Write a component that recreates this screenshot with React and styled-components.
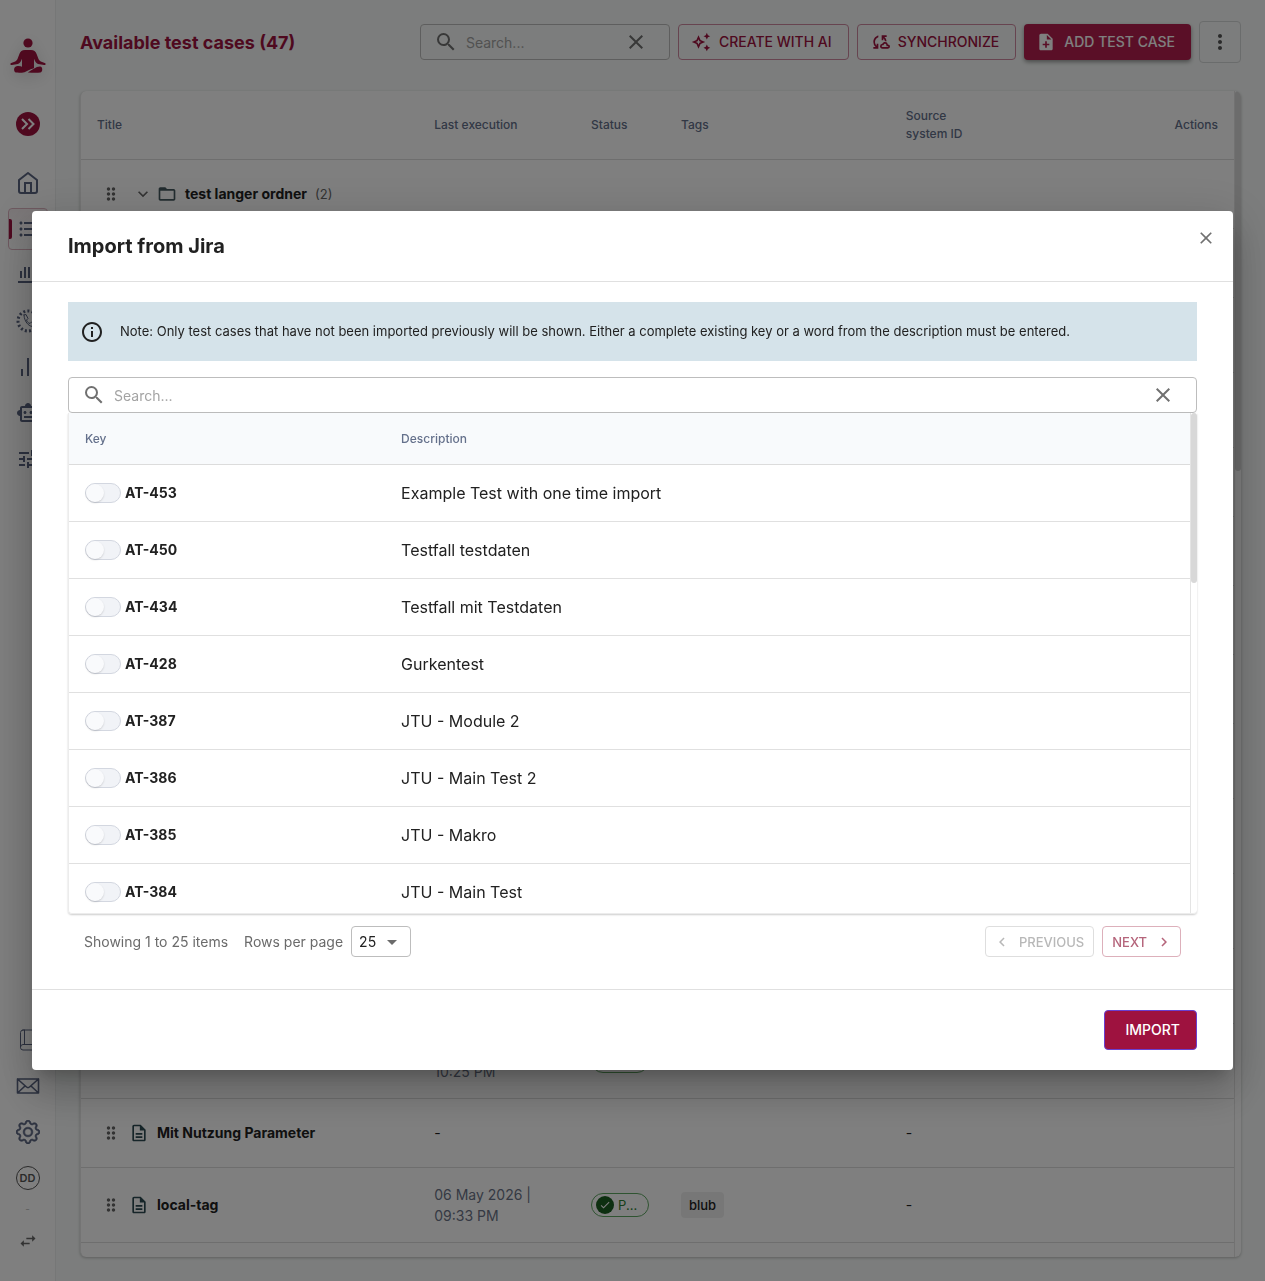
import React, { useState } from "react";
import styled, { createGlobalStyle, css } from "styled-components";
import {
  MdCheck,
  MdChevronLeft,
  MdChevronRight,
  MdClose,
  MdDragIndicator,
  MdExpandMore,
  MdArrowDropDown,
  MdFolderOpen,
  MdFormatListBulleted,
  MdInfoOutline,
  MdMoreVert,
  MdNoteAdd,
  MdOutlineAutoAwesome,
  MdOutlineCloudSync,
  MdOutlineDescription,
  MdOutlineSmartToy,
  MdSearch,
  MdSwapHoriz,
  MdTune,
} from "react-icons/md";
import { BsGear } from "react-icons/bs";

const brand = "#9e123f";
const muted = "#64708b";

const testCases = [
  { id: 1, title: "test langer ordner", folder: true, count: 2 },
  { id: 2 },
  { id: 3, tall: true },
  { id: 4, tall: true },
  { id: 5 },
  { id: 6 },
  { id: 7 },
  { id: 8 },
  { id: 9, tall: true },
  { id: 10, tall: true },
  { id: 11, tall: true },
  { id: 12, tall: true },
  { id: 13, date: ["06 May 2026 |", "10:25 PM"], passed: true },
  { id: 14, title: "Mit Nutzung Parameter" },
  { id: 15, title: "local-tag", date: ["06 May 2026 |", "09:33 PM"], passed: true, tag: "blub" },
];

const jiraIssues = [
  { key: "AT-453", description: "Example Test with one time import" },
  { key: "AT-450", description: "Testfall testdaten" },
  { key: "AT-434", description: "Testfall mit Testdaten" },
  { key: "AT-428", description: "Gurkentest" },
  { key: "AT-387", description: "JTU - Module 2" },
  { key: "AT-386", description: "JTU - Main Test 2" },
  { key: "AT-385", description: "JTU - Makro" },
  { key: "AT-384", description: "JTU - Main Test" },
];

const LogoIcon = () => (
  <svg width="36" height="36" viewBox="0 0 36 36" fill="currentColor">
    <circle cx="18" cy="5" r="4.6" />
    <path d="M15 12h6c3 0 4.600 1.300 5.600 4l1.800 4.800c.6 1.500 1.500 2.400 3 3l3.400 1.200c1.500.6 1 2.200-.7 2l-4.600-.7c-2.200-.4-3.600-1.500-4.500-3.400l-1-2.100v9.400l-3 .9-9 2V20.800l-1 2.100c-.9 1.900-2.300 3-4.500 3.400l-4.600.7c-1.700.2-2.200-1.400-.7-2l3.400-1.200c1.500-.6 2.400-1.500 3-3L9.400 16c1-2.700 2.600-4 5.600-4z" />
    <path d="M6.500 28.300c2.300-.5 4.300-.1 6.500.9l11 .2-9.500 4.800c-2.500.6-6 .6-8.500.4-2.400-.3-2.800-5.600.5-6.300z" />
    <path d="M17.800 34.400c2-1.400 4-2.800 6.400-4 2-1.300 3.800-2.100 6-2 2.900.4 2.600 5.800 0 6.200-3.500.3-8 .2-12.400-.2z" />
  </svg>
);

const ExpandIcon = () => (
  <svg width="24" height="24" viewBox="0 0 24 24" fill="none">
    <circle cx="12" cy="12" r="12" fill={brand} />
    <path d="M6 7l5 5-5 5M12.500 7l5 5-5 5" stroke="#fff" strokeWidth="2" />
  </svg>
);

const StrokeIcon = ({ children, width = 2 }) => (
  <svg width="24" height="24" viewBox="0 0 24 24" fill="none" stroke="currentColor" strokeWidth={width} strokeLinecap="round" strokeLinejoin="round">
    {children}
  </svg>
);

const HomeIcon = () => (
  <StrokeIcon>
    <path d="M3 9l9-7 9 7v11a2 2 0 0 1-2 2H5a2 2 0 0 1-2-2z" />
    <path d="M9 22V12h6v10" strokeLinejoin="miter" />
  </StrokeIcon>
);

const HistogramIcon = () => (
  <StrokeIcon>
    <path d="M5 8v7M9 4v11M13 4v11M17 8v7M21 6v9M2 19h20" strokeLinecap="butt" />
  </StrokeIcon>
);

const CallIcon = () => (
  <StrokeIcon width={1}>
    <circle cx="12" cy="12" r="10" strokeWidth="3" strokeDasharray="2 2.200" strokeLinecap="butt" />
    <path d="M8 6l2-.5 2 4-1.500 1.500c.6 1.800 1.700 3 3.500 3.500l1.500-1.500 3 2-.5 2c-4 2-10-4-10-11z" />
  </StrokeIcon>
);

const BarsIcon = () => (
  <StrokeIcon>
    <path d="M6 14v7M12 3v18M18 9v12" strokeLinecap="butt" />
  </StrokeIcon>
);

const BookIcon = () => (
  <StrokeIcon width={1}>
    <path d="M7 2h14v20H7a2.500 2.500 0 0 1-2.500-2.500v-15A2.500 2.500 0 0 1 7 2zM8.500 2v14.500M4.500 19A2.500 2.500 0 0 1 7 16.500h14" />
  </StrokeIcon>
);

const MailIcon = () => (
  <StrokeIcon width={1.6}>
    <path d="M1.500 5h21v14h-21zM1.500 5l9 8c1 .8 2 .8 3 0l9-8M1.500 19L9 12M22.500 19L15 12" />
  </StrokeIcon>
);

const navItems = [
  { name: "Home", icon: <HomeIcon /> },
  { name: "Test cases", icon: <MdFormatListBulleted size={24} />, active: true },
  { name: "Executions", icon: <HistogramIcon /> },
  { name: "Schedules", icon: <CallIcon /> },
  { name: "Reports", icon: <BarsIcon /> },
  { name: "Automation", icon: <MdOutlineSmartToy size={24} /> },
  { name: "Configuration", icon: <MdTune size={24} /> },
];

const SearchBox = ({ width }) => (
  <SearchField $width={width}>
    <MdSearch size={24} />
    <input type="text" placeholder="Search..." aria-label="Search" />
    <PlainButton aria-label="Clear search">
      <MdClose size={24} />
    </PlainButton>
  </SearchField>
);

const Sidebar = () => (
  <SidebarWrapper>
    <Logo href="#" aria-label="Start">
      <LogoIcon />
    </Logo>
    <ExpandButton aria-label="Expand menu">
      <ExpandIcon />
    </ExpandButton>
    <NavList>
      {navItems.map((item) => (
        <NavLink key={item.name} href="#" aria-label={item.name} $active={item.active}>
          {item.icon}
        </NavLink>
      ))}
    </NavList>
    <NavList $bottom>
      <NavLink href="#" aria-label="Documentation">
        <BookIcon />
      </NavLink>
      <NavLink href="#" aria-label="Contact">
        <MailIcon />
      </NavLink>
      <NavLink href="#" aria-label="Settings">
        <BsGear size={24} stroke="currentColor" strokeWidth={0.4} />
      </NavLink>
      <NavLink href="#" aria-label="Profile">
        <Avatar>DD</Avatar>
      </NavLink>
    </NavList>
    <ProjectName>-</ProjectName>
    <SwitchProject aria-label="Switch project">
      <MdSwapHoriz size={20} />
    </SwitchProject>
  </SidebarWrapper>
);

const TestCaseRow = ({ item }) => {
  if (!item.title && !item.date) {
    return (
      <tr>
        <Cell colSpan={6} $tall={item.tall} />
      </tr>
    );
  }

  return (
    <tr>
      <Cell>
        <TitleCell>
          <DragHandle>
            <MdDragIndicator size={20} />
          </DragHandle>
          {item.folder ? (
            <FolderIcons>
              <MdExpandMore size={20} color="#666" />
              <MdFolderOpen size={20} />
            </FolderIcons>
          ) : (
            <FileIcon size={20} />
          )}
          <strong>{item.title}</strong>
          {item.count && <Count>({item.count})</Count>}
        </TitleCell>
      </Cell>
      <Cell>
        {item.date ? (
          <DateText>
            {item.date[0]}
            <br />
            {item.date[1]}
          </DateText>
        ) : (
          !item.folder && "-"
        )}
      </Cell>
      <Cell>
        {item.passed && (
          <StatusChip>
            <CheckBadge>
              <MdCheck size={12} />
            </CheckBadge>
            <span>P...</span>
          </StatusChip>
        )}
      </Cell>
      <Cell>{item.tag && <Tag>{item.tag}</Tag>}</Cell>
      <Cell>{!item.folder && item.title && "-"}</Cell>
      <Cell />
    </tr>
  );
};

const ImportDialog = () => {
  const [selected, setSelected] = useState([]);

  const toggle = (key) => {
    setSelected(selected.includes(key) ? selected.filter((k) => k !== key) : [...selected, key]);
  };

  return (
    <Backdrop>
      <Dialog role="dialog" aria-modal="true" aria-labelledby="import-title">
        <DialogHeader>
          <h2 id="import-title">Import from Jira</h2>
          <CloseButton aria-label="Close">
            <MdClose size={20} />
          </CloseButton>
        </DialogHeader>
        <DialogBody>
          <Note>
            <MdInfoOutline size={24} />
            <p>
              Note: Only test cases that have not been imported previously will be shown. Either a complete existing key
              or a word from the description must be entered.
            </p>
          </Note>
          <SearchBox />
          <IssueArea>
            <TableScroll>
              <IssueTable>
                <thead>
                  <tr>
                    <IssueHead $width="28.2%">Key</IssueHead>
                    <IssueHead>Description</IssueHead>
                  </tr>
                </thead>
                <tbody>
                  {jiraIssues.map((issue) => (
                    <tr key={issue.key}>
                      <IssueCell>
                        <KeyLabel>
                          <Switch
                            type="checkbox"
                            checked={selected.includes(issue.key)}
                            onChange={() => toggle(issue.key)}
                          />
                          {issue.key}
                        </KeyLabel>
                      </IssueCell>
                      <IssueCell>{issue.description}</IssueCell>
                    </tr>
                  ))}
                </tbody>
              </IssueTable>
            </TableScroll>
            <ScrollTrack>
              <ScrollThumb $size="34%" />
            </ScrollTrack>
          </IssueArea>
          <Pagination>
            <span>Showing 1 to 25 items</span>
            <RowsLabel htmlFor="rows">Rows per page</RowsLabel>
            <SelectWrapper>
              <select id="rows" defaultValue="25">
                <option>25</option>
                <option>50</option>
              </select>
              <MdArrowDropDown size={24} />
            </SelectWrapper>
            <PageButtons>
              <PageButton disabled>
                <MdChevronLeft size={18} />
                PREVIOUS
              </PageButton>
              <PageButton $next>
                NEXT
                <MdChevronRight size={18} />
              </PageButton>
            </PageButtons>
          </Pagination>
        </DialogBody>
        <DialogFooter>
          <ImportButton>IMPORT</ImportButton>
        </DialogFooter>
      </Dialog>
    </Backdrop>
  );
};

const App = () => (
  <>
    <GlobalStyle />
    <Page>
      <Sidebar />
      <Main>
        <TopBar>
          <h1>Available test cases (47)</h1>
          <SearchBox width="250px" />
          <Button>
            <MdOutlineAutoAwesome size={20} />
            CREATE WITH AI
          </Button>
          <Button>
            <MdOutlineCloudSync size={20} />
            SYNCHRONIZE
          </Button>
          <PrimaryButton>
            <MdNoteAdd size={20} />
            ADD TEST CASE
          </PrimaryButton>
          <MoreButton aria-label="More">
            <MdMoreVert size={24} />
          </MoreButton>
        </TopBar>
        <Card>
          <TableScroll>
            <CaseTable>
              <thead>
                <tr>
                  <HeadCell $width="29.25%">Title</HeadCell>
                  <HeadCell $width="13.6%">Last execution</HeadCell>
                  <HeadCell $width="7.8%">Status</HeadCell>
                  <HeadCell $width="19.5%">Tags</HeadCell>
                  <HeadCell $width="9%">Source system ID</HeadCell>
                  <HeadCell $right>Actions</HeadCell>
                </tr>
              </thead>
              <tbody>
                {testCases.map((item) => (
                  <TestCaseRow key={item.id} item={item} />
                ))}
              </tbody>
            </CaseTable>
          </TableScroll>
          <ScrollTrack>
            <ScrollThumb $size="32.6%" />
          </ScrollTrack>
        </Card>
      </Main>
    </Page>
    <ImportDialog />
  </>
);

export default App;

const GlobalStyle = createGlobalStyle`
  * {
    box-sizing: border-box;
  }
  body {
    margin: 0;
    background: #f8fbfa;
    color: #212121;
    font-family: Inter, "Liberation Sans", sans-serif;
    font-size: 14px;
  }
  button, input, select {
    font-family: inherit;
  }
  button {
    cursor: pointer;
  }
  svg {
    flex-shrink: 0;
  }
`;

const Page = styled.div`
  display: flex;
  height: 100vh;
`;

const SidebarWrapper = styled.aside`
  width: 56px;
  flex-shrink: 0;
  display: flex;
  flex-direction: column;
  align-items: center;
  padding: 38px 0 30px;
  background: #fff;
  border-right: 1px solid #eceeef;
`;

const Logo = styled.a`
  display: flex;
  color: ${brand};
  filter: drop-shadow(0 4px 8px rgba(0, 0, 0, 0.15));
`;

const PlainButton = styled.button`
  display: flex;
  padding: 0;
  border: none;
  background: none;
  color: #707070;
`;

const ExpandButton = styled(PlainButton)`
  margin: 38px 0 26px;
`;

const NavList = styled.nav`
  display: flex;
  flex-direction: column;
  gap: 4px;
  margin-top: ${({ $bottom }) => ($bottom ? "auto" : "0")};
`;

const NavLink = styled.a`
  display: flex;
  align-items: center;
  justify-content: center;
  width: 40px;
  height: 42px;
  border-radius: 4px;
  color: #5a6480;
  text-decoration: none;
  ${({ $active }) =>
    $active &&
    css`
      justify-content: flex-start;
      gap: 5px;
      border: 1px solid #ddb3c0;
      background: linear-gradient(#f6eef0, #fff);
      &::before {
        content: "";
        width: 3px;
        height: 20px;
        border-radius: 0 2px 2px 0;
        background: ${brand};
      }
    `}
`;

const Avatar = styled.span`
  display: flex;
  align-items: center;
  justify-content: center;
  width: 24px;
  height: 24px;
  border: 1px solid #555;
  border-radius: 50%;
  color: #555;
  font-size: 11px;
  font-weight: 600;
`;

const ProjectName = styled.span`
  margin: 4px 0 16px;
  color: #bbb;
  font-size: 10px;
  line-height: 12px;
`;

const SwitchProject = styled(PlainButton)`
  color: #666;
`;

const Main = styled.main`
  flex: 1;
  min-width: 0;
  display: flex;
  flex-direction: column;
  gap: 28px;
  padding: 21px 24px 24px;
`;

const TopBar = styled.header`
  display: flex;
  align-items: center;
  gap: 8px;
  h1 {
    flex: 1;
    margin: 0;
    color: ${brand};
    font-size: 18px;
    font-weight: 700;
    font-optical-sizing: none;
  }
`;

const SearchField = styled.div`
  display: flex;
  align-items: center;
  gap: 8px;
  width: ${({ $width }) => $width || "100%"};
  height: 36px;
  padding: 0 21px 0 13px;
  border: 1px solid #bdbdbd;
  border-radius: 4px;
  color: #707070;
  input {
    flex: 1;
    min-width: 0;
    padding: 0;
    border: none;
    outline: none;
    background: none;
    font-size: 14px;
  }
  input::placeholder {
    color: #a3a3a3;
  }
`;

const Button = styled.button`
  display: flex;
  align-items: center;
  gap: 8px;
  height: 36px;
  padding: 0 16px 0 12px;
  border: 1px solid #cf89a0;
  border-radius: 4px;
  background: transparent;
  color: ${brand};
  font-size: 14px;
  font-weight: 500;
  line-height: 24px;
  white-space: nowrap;
`;

const PrimaryButton = styled(Button)`
  border: none;
  background: #b41f4e;
  box-shadow: 0 2px 4px rgba(0, 0, 0, 0.4);
  color: #fff;
`;

const MoreButton = styled.button`
  display: flex;
  align-items: center;
  justify-content: center;
  width: 42px;
  height: 42px;
  padding: 0;
  border: 1px solid #d5d8d8;
  border-radius: 4px;
  background: transparent;
  color: #555;
`;

const Card = styled.section`
  flex: 1;
  min-height: 0;
  display: flex;
  overflow: hidden;
  border-left: 1px solid #e8e8e8;
  border-radius: 6px;
  background: #fff;
  box-shadow: 0 1px 3px rgba(0, 0, 0, 0.25);
`;

const TableScroll = styled.div`
  flex: 1;
  min-width: 0;
  overflow-y: auto;
  scrollbar-width: none;
`;

const ScrollTrack = styled.div`
  width: 7px;
  border-left: 1px solid #e4e4e4;
`;

const ScrollThumb = styled.div`
  height: ${({ $size }) => $size};
  border-radius: 3px;
  background: #d8d8d8;
`;

const CaseTable = styled.table`
  width: 100%;
  table-layout: fixed;
  border-collapse: separate;
  border-spacing: 0;
`;

const HeadCell = styled.th`
  width: ${({ $width }) => $width || "auto"};
  height: 69px;
  padding: 0 16px;
  border-bottom: 1px solid #dcdcdc;
  color: ${muted};
  font-size: 12px;
  font-weight: 500;
  line-height: 18px;
  text-align: ${({ $right }) => ($right ? "right" : "left")};
`;

const Cell = styled.td`
  height: ${({ $tall }) => ($tall ? "75px" : "69px")};
  padding: 16px;
  border-bottom: 1px solid #dcdcdc;
  line-height: 20px;
`;

const TitleCell = styled.div`
  display: flex;
  align-items: center;
  gap: 8px;
  strong {
    font-weight: 700;
    white-space: nowrap;
  }
`;

const DragHandle = styled.span`
  display: flex;
  justify-content: center;
  width: 28px;
  margin-right: -4px;
  color: #666;
`;

const FolderIcons = styled.span`
  display: flex;
  gap: 4px;
  margin-left: 4px;
  color: #45595f;
`;

const FileIcon = styled(MdOutlineDescription)`
  color: #2c4a52;
`;

const Count = styled.span`
  color: #666;
  font-size: 13px;
`;

const DateText = styled.div`
  color: #6b7387;
  line-height: 21px;
  white-space: nowrap;
`;

const StatusChip = styled.span`
  display: inline-flex;
  align-items: center;
  gap: 4px;
  width: 58px;
  height: 24px;
  padding-left: 4px;
  border: 1px solid #5fa863;
  border-radius: 12px;
  color: #2e7d32;
  font-size: 13px;
  vertical-align: middle;
`;

const CheckBadge = styled.span`
  display: flex;
  align-items: center;
  justify-content: center;
  width: 18px;
  height: 18px;
  border-radius: 50%;
  background: #1b5e20;
  color: #fff;
`;

const Tag = styled.span`
  display: inline-block;
  padding: 0 8px;
  border-radius: 4px;
  background: #efefef;
  font-size: 13px;
  font-weight: 500;
  line-height: 26px;
  vertical-align: middle;
`;

const Backdrop = styled.div`
  position: fixed;
  inset: 0;
  display: flex;
  align-items: center;
  justify-content: center;
  padding: 32px;
  background: rgba(0, 0, 0, 0.5);
`;

const Dialog = styled.div`
  width: 100%;
  border-radius: 4px;
  background: #fff;
  box-shadow: 0 11px 15px -7px rgba(0, 0, 0, 0.2), 0 24px 38px 3px rgba(0, 0, 0, 0.14),
    0 9px 46px 8px rgba(0, 0, 0, 0.12);
`;

const DialogHeader = styled.header`
  display: flex;
  align-items: flex-start;
  justify-content: space-between;
  border-bottom: 1px solid #e0e0e0;
  h2 {
    margin: 0;
    padding: 20px 36px;
    font-size: 20px;
    font-weight: 700;
    line-height: 30px;
  }
`;

const CloseButton = styled(PlainButton)`
  margin: 12px;
  padding: 5px;
`;

const DialogBody = styled.div`
  padding: 20px 36px 32px;
`;

const Note = styled.div`
  display: flex;
  align-items: center;
  gap: 16px;
  min-height: 59px;
  margin-bottom: 16px;
  padding: 0 12px;
  background: #d5e3ea;
  p {
    margin: 0;
    font-size: 13px;
    line-height: 19px;
  }
`;

const IssueArea = styled.div`
  display: flex;
  height: 501px;
  overflow: hidden;
  border-bottom: 1px solid #ececec;
  border-left: 1px solid #ececec;
  border-radius: 0 0 4px 4px;
  box-shadow: 0 1px 2px rgba(0, 0, 0, 0.2);
`;

const IssueTable = styled(CaseTable)``;

const IssueHead = styled(HeadCell)`
  height: 52px;
  background: #f8fafc;
`;

const IssueCell = styled.td`
  height: 57px;
  padding: 0 16px;
  border-bottom: 1px solid #e0e0e0;
  font-size: 16px;
`;

const KeyLabel = styled.label`
  display: flex;
  align-items: center;
  gap: 4px;
  font-size: 14px;
  font-weight: 700;
  line-height: 20px;
`;

const Switch = styled.input`
  appearance: none;
  display: flex;
  width: 36px;
  height: 20px;
  margin: 0;
  border: 1px solid #d3d7e0;
  border-radius: 10px;
  background: #f1f3f7;
  &::before {
    content: "";
    width: 18px;
    height: 18px;
    border-radius: 50%;
    background: #f9fafc;
    box-shadow: 0 1px 2px rgba(0, 0, 0, 0.15);
  }
  &:checked {
    justify-content: flex-end;
    background: ${brand};
  }
`;

const Pagination = styled.div`
  display: flex;
  align-items: center;
  gap: 8px;
  padding: 12px 16px 0;
  color: #6b6b6b;
`;

const RowsLabel = styled.label`
  margin-left: 8px;
`;

const SelectWrapper = styled.div`
  display: grid;
  align-items: center;
  width: 60px;
  height: 31px;
  select,
  svg {
    grid-area: 1 / 1;
  }
  select {
    height: 100%;
    padding: 0 7px;
    appearance: none;
    border: 1px solid #bdbdbd;
    border-radius: 4px;
    background: #fff;
    color: #212121;
    font-size: 14px;
  }
  svg {
    justify-self: end;
    margin-right: 7px;
    pointer-events: none;
  }
`;

const PageButtons = styled.div`
  display: flex;
  gap: 8px;
  margin-left: auto;
`;

const PageButton = styled.button`
  display: flex;
  align-items: center;
  gap: 8px;
  height: 31px;
  padding: ${({ $next }) => ($next ? "0 7px 0 9px" : "0 9px 0 7px")};
  border: 1px solid #ddb0bb;
  border-radius: 4px;
  background: #fff;
  color: #b5657b;
  font-size: 13px;
  font-weight: 500;
  line-height: 22px;
  &:disabled {
    border-color: #dedede;
    color: #b8b8b8;
  }
`;

const DialogFooter = styled.footer`
  display: flex;
  justify-content: flex-end;
  padding: 20px 36px;
  border-top: 1px solid #e0e0e0;
`;

const ImportButton = styled.button`
  height: 40px;
  padding: 0 16px 0 20px;
  border: 1px solid #6a3fd0;
  border-radius: 4px;
  background: ${brand};
  color: #fff;
  font-size: 14px;
  font-weight: 500;
  line-height: 24px;
`;
